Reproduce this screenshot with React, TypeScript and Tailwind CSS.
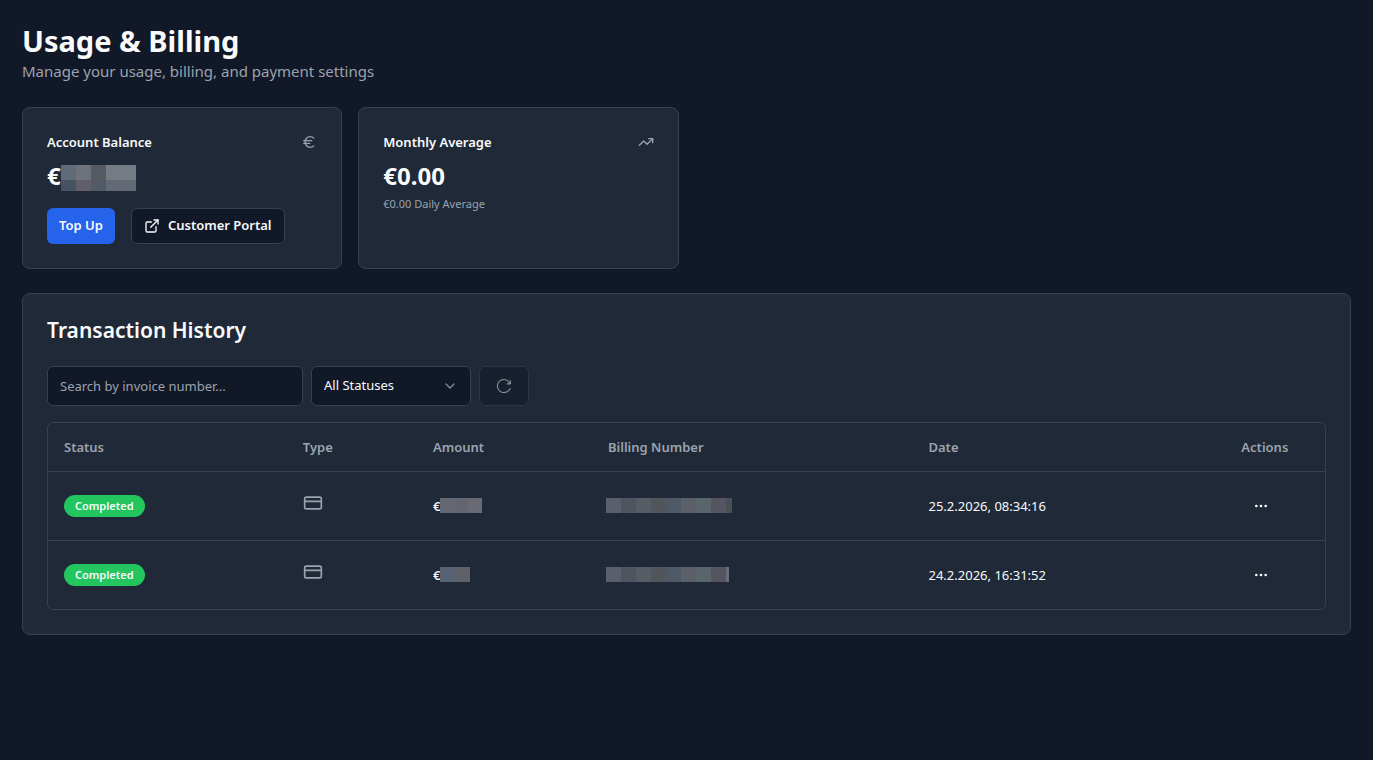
import { CreditCard, Ellipsis, Euro, TrendingUp, ChevronDown, ExternalLink } from "lucide-react";

const balanceMask = [
    "bg-[#5f6b78]", "bg-[#6e737b]", "bg-[#555b61]", "bg-[#767c85]", "bg-[#767c85]",
    "bg-[#455362]", "bg-[#625f68]", "bg-[#525b65]", "bg-[#636a75]", "bg-[#636a75]",
]

const numberMask = [
    "bg-[#5a5f6d]", "bg-[#50545f]", "bg-[#565c64]", "bg-[#51565d]", "bg-[#4f5965]",
    "bg-[#5b5f68]", "bg-[#59646b]", "bg-[#535661]",
]

const columns = [
    { title: "Status", width: "w-[18.7%]" },
    { title: "Type", width: "w-[10.2%]" },
    { title: "Amount", width: "w-[13.7%]" },
    { title: "Billing Number", width: "w-[25.1%]" },
    { title: "Date", width: "w-[24.5%]" },
    { title: "Actions", width: "w-[7.8%]" },
]

const transactions = [
    {
        status: "Completed",
        amountMask: ["bg-[#626773]", "bg-[#63656f]", "bg-[#6a6a75]"],
        amountWidth: "w-[42px]",
        numberEnd: "w-[6px] bg-[#4a4e55]",
        date: "25.2.2026, 08:34:16"
    },
    {
        status: "Completed",
        amountMask: ["bg-[#566174]", "bg-[#5e6268]"],
        amountWidth: "w-[30px]",
        numberEnd: "w-[3px] bg-[#6a6e75]",
        date: "24.2.2026, 16:31:52"
    }
]

const ReloadIcon = () => {
    return (
        <svg viewBox="0 0 15 15" fill="currentColor" className="size-4" aria-hidden="true">
            <path
                fillRule="evenodd"
                clipRule="evenodd"
                d="M1.85 7.5C1.85 4.665 4.06 1.85 7.5 1.85C10.278 1.85 11.652 3.906 12.237 5H10.5C10.224 5 10 5.224 10 5.5C10 5.776 10.224 6 10.5 6H13.5C13.776 6 14 5.776 14 5.5V2.5C14 2.224 13.776 2 13.5 2C13.224 2 13 2.224 13 2.5V4.313C12.296 3.071 10.666 0.85 7.5 0.85C3.437 0.85 0.85 4.185 0.85 7.5C0.85 10.815 3.437 14.15 7.5 14.15C9.444 14.15 11.062 13.381 12.215 12.208C12.832 11.581 13.313 10.839 13.642 10.041C13.747 9.785 13.625 9.493 13.37 9.388C13.114 9.283 12.822 9.405 12.717 9.66C12.436 10.343 12.025 10.975 11.501 11.507C10.53 12.496 9.165 13.15 7.5 13.15C4.06 13.15 1.85 10.335 1.85 7.5Z"
            />
        </svg>
    )
}

const StatCards = () => {
    return (
        <section className="grid grid-cols-4 gap-4">
            <div className="rounded-lg border border-gray-700 bg-[#1f2937] p-6">
                <div className="flex items-center justify-between">
                    <h3 className="text-[13px] leading-5 font-semibold">Account Balance</h3>
                    <Euro className="size-4 text-[#9ca3af]" />
                </div>
                <div className="mt-2 flex h-8 items-center text-[24px] leading-8 font-bold">
                    €
                    <div className="mt-1 grid w-[75px] grid-cols-5 grid-rows-[15px_11px]">
                        {balanceMask.map((color, index) => <span className={color} key={index}></span>)}
                    </div>
                </div>
                <div className="mt-4 flex gap-4">
                    <button className="h-9 rounded-md bg-[#2563eb] px-3 text-[13px] font-semibold">Top Up</button>
                    <button className="flex h-9 items-center gap-2 rounded-md border border-gray-700 bg-[#111827] px-3 text-[13px] font-semibold">
                        <ExternalLink className="size-4" />
                        Customer Portal
                    </button>
                </div>
            </div>
            <div className="rounded-lg border border-gray-700 bg-[#1f2937] p-6">
                <div className="flex items-center justify-between">
                    <h3 className="text-[13px] leading-5 font-semibold">Monthly Average</h3>
                    <TrendingUp className="size-4 text-[#9ca3af]" />
                </div>
                <div className="mt-2 text-[24px] leading-8 font-bold">€0.00</div>
                <p className="mt-1 text-[11px] leading-4 text-[#9ca3af]">€0.00 Daily Average</p>
            </div>
        </section>
    )
}

const TransactionTable = () => {
    return (
        <div className="mt-4 overflow-hidden rounded-md border border-gray-700">
            <table className="w-full table-fixed text-left text-[13px] leading-5">
                <thead>
                    <tr className="h-12 border-b border-gray-700 text-[#9ca3af]">
                        {columns.map((column) => (
                            <th className={`${column.width} px-4 font-semibold`} key={column.title}>{column.title}</th>
                        ))}
                    </tr>
                </thead>
                <tbody>
                    {
                        transactions.map((item) => {
                            return (
                                <tr className="h-[69px] border-b border-gray-700 last:border-b-0" key={item.date}>
                                    <td className="px-4">
                                        <span className="inline-flex h-[22px] items-center rounded-full bg-[#22c55e] px-[11px] text-[11px] font-semibold">
                                            {item.status}
                                        </span>
                                    </td>
                                    <td className="px-4 pb-1.5">
                                        <CreditCard className="size-5 text-[#9ca3af]" />
                                    </td>
                                    <td className="px-4">
                                        <div className="flex items-center font-semibold">
                                            €
                                            <div className={`${item.amountWidth} flex h-[15px]`}>
                                                {item.amountMask.map((color) => <span className={`${color} flex-1`} key={color}></span>)}
                                            </div>
                                        </div>
                                    </td>
                                    <td className="px-3.5">
                                        <div className="flex h-[15px]">
                                            {numberMask.map((color) => <span className={`${color} w-[15px]`} key={color}></span>)}
                                            <span className={item.numberEnd}></span>
                                        </div>
                                    </td>
                                    <td className="px-4">{item.date}</td>
                                    <td className="px-4">
                                        <button aria-label="Open actions" className="flex size-10 items-center justify-center">
                                            <Ellipsis className="size-4" />
                                        </button>
                                    </td>
                                </tr>
                            )
                        })
                    }
                </tbody>
            </table>
        </div>
    )
}

const App = () => {
    return (
        <main className="min-h-screen bg-[#111827] px-[22px] pt-[23px] pb-6 font-['Noto_Sans',sans-serif] text-[#f9fafb]">
            <header className="mb-6">
                <h1 className="text-[29px] leading-9 font-bold">Usage &amp; Billing</h1>
                <p className="text-[15px] leading-6 text-[#9ca3af]">Manage your usage, billing, and payment settings</p>
            </header>
            <StatCards />
            <section className="mt-6 rounded-lg border border-gray-700 bg-[#1f2937] p-6">
                <h2 className="text-[21px] leading-6 font-semibold">Transaction History</h2>
                <div className="mt-6 flex gap-2">
                    <input
                        type="text"
                        aria-label="Search by invoice number"
                        placeholder="Search by invoice number..."
                        className="h-10 w-64 rounded-md border border-gray-700 bg-[#111827] px-3 text-[13px] placeholder:text-[#9ca3af]"
                    />
                    <div className="relative">
                        <select aria-label="Status" className="h-10 w-40 appearance-none rounded-md border border-gray-700 bg-[#111827] px-3 text-[13px]">
                            <option>All Statuses</option>
                            <option>Completed</option>
                        </select>
                        <ChevronDown className="pointer-events-none absolute top-3 right-[13px] size-4 opacity-50" />
                    </div>
                    <button aria-label="Refresh" disabled className="flex h-10 items-center rounded-md border border-gray-700 bg-[#111827] px-4 opacity-50">
                        <ReloadIcon />
                    </button>
                </div>
                <TransactionTable />
            </section>
        </main>
    )
}

export default App
